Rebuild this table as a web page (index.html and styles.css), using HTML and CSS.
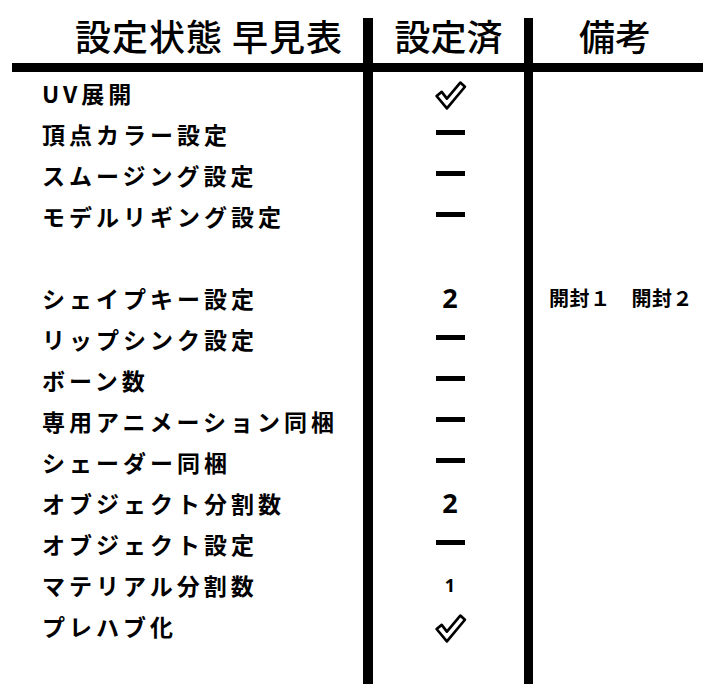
FILE: index.html
```html
<!DOCTYPE html>
<html lang="ja">
<head>
<meta charset="utf-8">
<link rel="stylesheet" href="styles.css">
</head>
<body>
<div class="sheet">
  <div class="head head-1">設定状態 早見表</div>
  <div class="vline vline-1"></div>
  <div class="head head-2">設定済</div>
  <div class="vline vline-2"></div>
  <div class="head head-3">備考</div>
  <div class="hline"></div>

  <div class="col col-items">
    <div class="row">UV展開</div>
    <div class="row">頂点カラー設定</div>
    <div class="row">スムージング設定</div>
    <div class="row">モデルリギング設定</div>
    <div class="row"></div>
    <div class="row">シェイプキー設定</div>
    <div class="row">リップシンク設定</div>
    <div class="row">ボーン数</div>
    <div class="row">専用アニメーション同梱</div>
    <div class="row">シェーダー同梱</div>
    <div class="row">オブジェクト分割数</div>
    <div class="row">オブジェクト設定</div>
    <div class="row">マテリアル分割数</div>
    <div class="row">プレハブ化</div>
  </div>

  <div class="col col-done">
    <div class="row"><svg class="check" viewBox="0 0 32 30" width="33" height="31"><path d="M2.5 15.5 L7.5 11.5 L12.5 18 L25.5 2.5 L30 6.5 L12.5 27.5 Z"/></svg></div>
    <div class="row"><span class="dash"></span></div>
    <div class="row"><span class="dash"></span></div>
    <div class="row"><span class="dash"></span></div>
    <div class="row"></div>
    <div class="row"><span class="num">2</span></div>
    <div class="row"><span class="dash"></span></div>
    <div class="row"><span class="dash"></span></div>
    <div class="row"><span class="dash"></span></div>
    <div class="row"><span class="dash"></span></div>
    <div class="row"><span class="num">2</span></div>
    <div class="row"><span class="dash"></span></div>
    <div class="row"><span class="num num-small">1</span></div>
    <div class="row"><svg class="check" viewBox="0 0 32 30" width="33" height="31"><path d="M2.5 15.5 L7.5 11.5 L12.5 18 L25.5 2.5 L30 6.5 L12.5 27.5 Z"/></svg></div>
  </div>

  <div class="col col-notes">
    <div class="row"></div>
    <div class="row"></div>
    <div class="row"></div>
    <div class="row"></div>
    <div class="row"></div>
    <div class="row note">開封１　開封２</div>
  </div>
</div>
</body>
</html>
```

FILE: styles.css
```css
html, body {
  margin: 0;
  padding: 0;
  background: #ffffff;
}

body {
  width: 708px;
  height: 684px;
  overflow: hidden;
  font-family: "Noto Sans CJK JP", "Noto Sans", sans-serif;
  color: #000;
}

.sheet {
  margin-top: 18px;
  height: 666px;
  display: grid;
  grid-template-columns: 363px 10px 151px 9px 1fr;
  grid-template-rows: 45px 9px 1fr;
}

.head {
  grid-row: 1;
  font-size: 36px;
  font-weight: 500;
  line-height: 50px;
  margin-top: -8px;
  white-space: nowrap;
}

.head-1 {
  grid-column: 1;
  text-align: right;
  padding-right: 20px;
  letter-spacing: 1px;
}

.head-2 {
  grid-column: 3;
  text-align: center;
}

.head-3 {
  grid-column: 5;
  padding-left: 46px;
}

.vline {
  grid-row: 1 / 4;
  background: #000;
  z-index: 1;
}

.vline-1 { grid-column: 2; }
.vline-2 { grid-column: 4; }

.hline {
  grid-row: 2;
  grid-column: 1 / 6;
  background: #000;
  margin-left: 12px;
  margin-right: 5px;
}

.col {
  grid-row: 3;
  display: flex;
  flex-direction: column;
}

.col-items { grid-column: 1; }
.col-done { grid-column: 3; }
.col-notes { grid-column: 5; }

.row {
  height: 41px;
  flex: none;
  display: flex;
  align-items: center;
}

.col-items .row {
  padding-left: 42px;
  font-size: 23px;
  font-weight: 700;
  letter-spacing: 4px;
  white-space: nowrap;
}

.col-done .row {
  justify-content: center;
  padding-left: 3px;
}

.dash {
  display: block;
  width: 29px;
  height: 5px;
  background: #000;
  margin-top: -2px;
}

.check {
  display: block;
  margin-top: 6px;
}

.check path {
  fill: #fff;
  stroke: #000;
  stroke-width: 2.6;
  stroke-linejoin: round;
}

.num {
  font-family: "Noto Sans", sans-serif;
  font-weight: 700;
  font-size: 27px;
  line-height: 1;
}

.num-small {
  font-size: 18px;
}

.note {
  padding-left: 16px;
  font-size: 20px;
  font-weight: 700;
  letter-spacing: 0.6px;
  white-space: nowrap;
}
```
